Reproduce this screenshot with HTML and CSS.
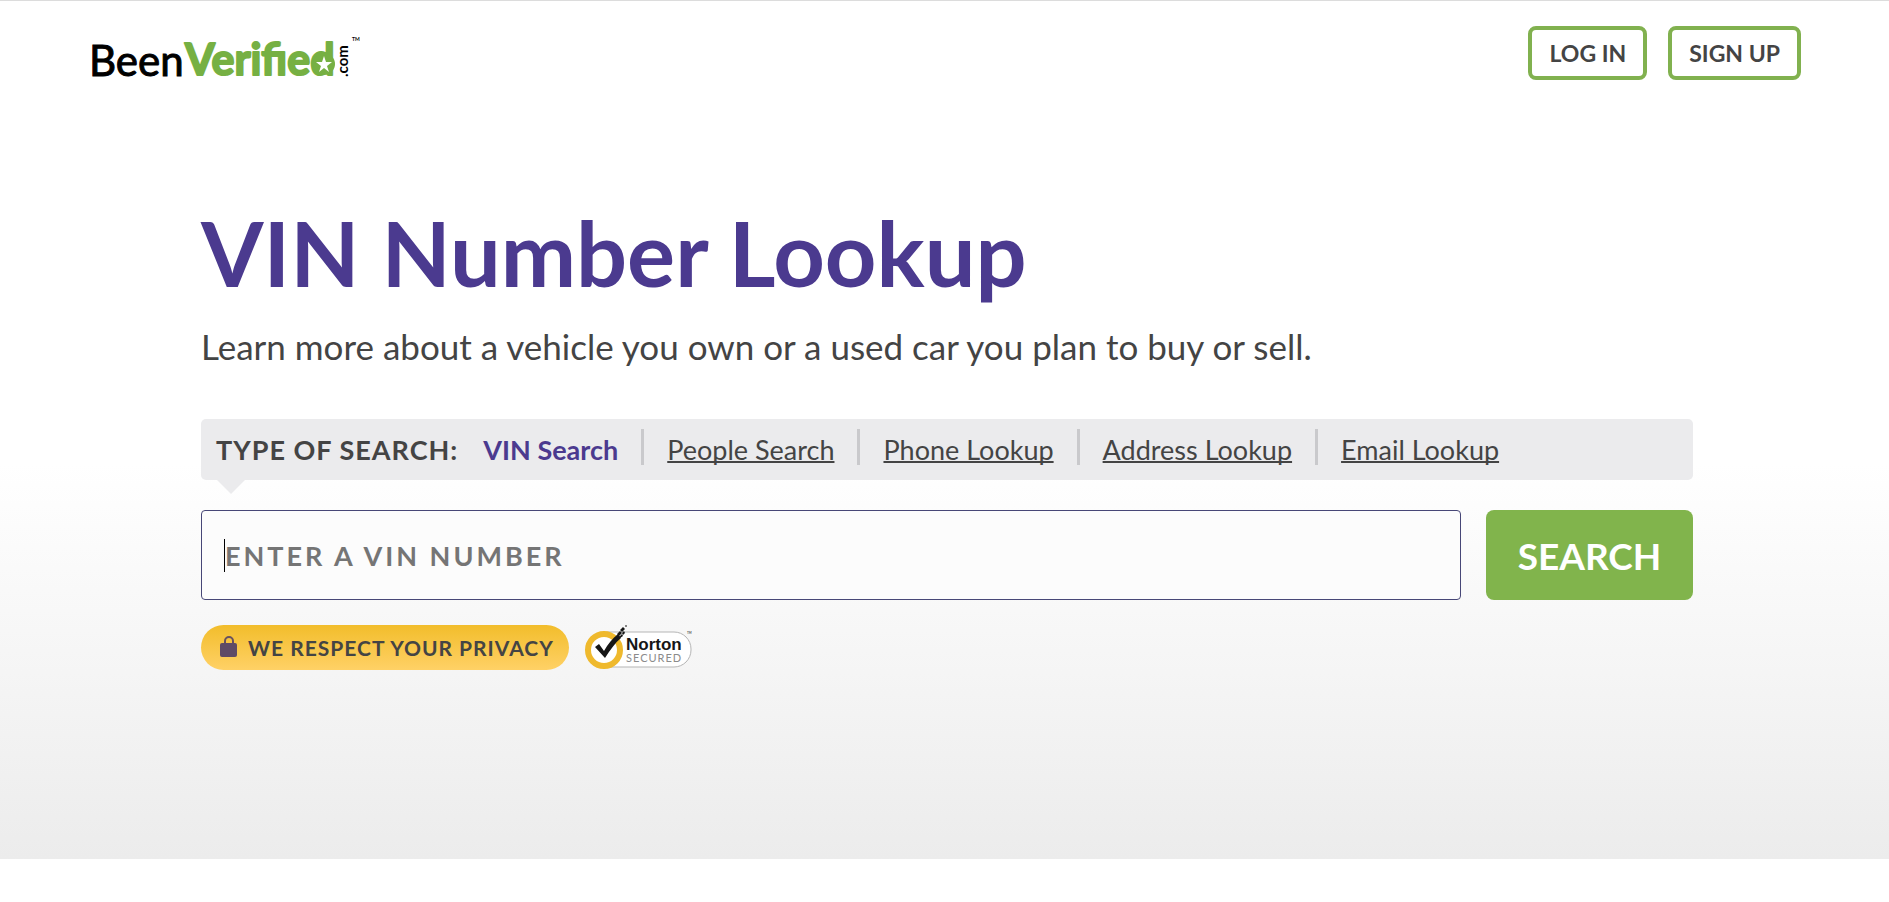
FILE: index.html
```
<!DOCTYPE html>
<html lang="en">
<head>
  <meta charset="UTF-8">
  <meta name="viewport" content="width=device-width, initial-scale=1.0">
  <title>VIN Number Lookup</title>
  <link rel="stylesheet" href="styles.css">
</head>
<body>
  <div class="hero">
    <header class="header">
      <a class="logo" href="#" aria-label="BeenVerified.com">
        <svg width="270" height="54" viewBox="0 0 270 54">
          <text class="logo-been" x="-3" y="50">Been</text>
          <text class="logo-verified" x="93" y="49">Verified</text>
          <circle cx="232" cy="38" r="11" fill="#76b043"/>
          <path d="M232 30l2 6h6l-5 4 2 6-5-4-5 4 2-6-5-4h6z" fill="#fff"/>
          <text class="logo-com" transform="translate(256 51) rotate(-90)">.com</text>
          <text class="logo-tm" x="260" y="15">TM</text>
        </svg>
      </a>
      <nav class="account">
        <a class="account-button" href="#">LOG IN</a>
        <a class="account-button" href="#">SIGN UP</a>
      </nav>
    </header>

    <main class="content">
      <h1>VIN Number Lookup</h1>
      <p class="subtitle">Learn more about a vehicle you own or a used car you plan to buy or sell.</p>

      <nav class="search-types">
        <span class="search-label">TYPE OF SEARCH:</span>
        <ul>
          <li class="active">VIN Search</li>
          <li><a href="#">People Search</a></li>
          <li><a href="#">Phone Lookup</a></li>
          <li><a href="#">Address Lookup</a></li>
          <li><a href="#">Email Lookup</a></li>
        </ul>
      </nav>

      <form class="search-form">
        <div class="vin-field">
          <input type="text" name="vin" aria-label="VIN number" placeholder="ENTER A VIN NUMBER">
        </div>
        <button type="submit">SEARCH</button>
      </form>

      <div class="badges">
        <div class="privacy">
          <svg width="18" height="22" viewBox="0 0 18 22">
            <path d="M5 8V5a4 4 0 0 1 8 0v3" fill="none" stroke="#67505f" stroke-width="2"/>
            <rect x="0" y="7" width="17" height="14" rx="2" fill="#5f4b66"/>
          </svg>
          <span>WE RESPECT YOUR PRIVACY</span>
        </div>
        <svg class="norton" width="110" height="46" viewBox="0 0 110 46">
          <rect x="8" y="8" width="99" height="35" rx="17" fill="#fff" stroke="#b5b5b5"/>
          <circle cx="20" cy="26" r="16" fill="#fff" stroke="#efb92d" stroke-width="6"/>
          <path d="M11 23l4-3 5 7c4-7 8-12 14-17l3 4c-6 5-11 12-16 20z" fill="#161616"/>
          <path d="M33 10l3-3 2 2-3 3zM36 6l3-3 2 2-3 3zM38 9l2-2 1 2-2 2zM35 13l3-3 1 2-3 2zM41 2l1-1 1 1-1 1z" fill="#161616"/>
          <text class="norton-name" x="42" y="26">Norton</text>
          <text class="norton-secured" x="42" y="38">SECURED</text>
          <text class="norton-tm" x="103" y="10">TM</text>
        </svg>
      </div>
    </main>
  </div>
</body>
</html>
```
FILE: styles.css
```
* {
  box-sizing: border-box;
}

body {
  margin: 0;
  font-family: Lato, "Liberation Sans", sans-serif;
  color: #444;
  background-color: #fff;
}

.hero {
  border-top: 1px solid #dcdcdc;
  padding-bottom: 189px;
  background: linear-gradient(#fff 54%, #ececec);
}

.header {
  display: flex;
  justify-content: space-between;
  align-items: center;
  padding: 25px 88px 0 92px;
}

.logo,
.logo svg {
  display: block;
}

.logo svg {
  overflow: visible;
}

.logo-been {
  font-size: 42px;
  fill: #000;
  stroke: #000;
  stroke-width: 1px;
}

.logo-verified {
  font-size: 43px;
  font-weight: bold;
  fill: #76b043;
  stroke: #76b043;
  stroke-width: 2px;
  stroke-linejoin: round;
}

.logo-com {
  font-size: 15px;
  font-weight: bold;
}

.logo-tm {
  font-size: 5px;
  font-weight: bold;
}

.account {
  display: flex;
  gap: 21px;
}

.account-button {
  padding: 0 17px;
  border: 4px solid #81b14f;
  border-radius: 8px;
  font-size: 23px;
  font-weight: bold;
  line-height: 46px;
  color: #444;
  text-decoration: none;
}

.content {
  padding: 116px 196px 0 201px;
}

h1 {
  margin: 0;
  font-size: 90px;
  line-height: 112px;
  color: #4b3a8f;
}

.subtitle {
  margin: 14px 0 0;
  font-size: 35px;
  line-height: 48px;
}

.search-types {
  position: relative;
  display: flex;
  align-items: center;
  height: 61px;
  margin-top: 49px;
  padding-left: 15px;
  border-radius: 5px;
  background-color: #ebebed;
  font-size: 27px;
  line-height: 36px;
}

/* little arrow under the bar */
.search-types::after {
  content: "";
  position: absolute;
  top: 100%;
  left: 16px;
  border: 14px solid transparent;
  border-top-color: #ebebed;
  border-bottom: 0;
}

.search-label {
  margin-right: 2px;
  font-weight: bold;
  letter-spacing: 1px;
}

.search-types ul {
  display: flex;
  margin: 0;
  padding: 0;
  list-style: none;
}

.search-types li {
  display: flex;
  padding: 0 23px;
}

.search-types li + li::before {
  content: "";
  width: 3px;
  height: 36px;
  margin: -3px 23px 0 0;
  background-color: #c9c9cc;
}

.search-types li + li {
  padding-left: 0;
}

.search-types a {
  color: #444;
  text-decoration-thickness: 2px;
  text-decoration-skip-ink: none;
}

.active {
  font-weight: bold;
  color: #4b3a8f;
}

.search-form {
  display: flex;
  gap: 25px;
  margin-top: 30px;
}

.vin-field {
  position: relative;
  flex: 1;
}

/* text cursor */
.vin-field::before {
  content: "";
  position: absolute;
  top: 29px;
  left: 23px;
  width: 1px;
  height: 33px;
  background-color: #000;
}

.vin-field input {
  display: block;
  width: 100%;
  height: 90px;
  padding: 0 23px;
  border: 1px solid #474777;
  border-radius: 4px;
  outline: none;
  background-color: #fcfcfc;
  font-family: inherit;
  font-size: 27px;
  font-weight: bold;
  letter-spacing: 3px;
}

.vin-field input::placeholder {
  color: #757575;
  opacity: 1;
}

.search-form button {
  width: 207px;
  height: 90px;
  border: 0;
  border-radius: 8px;
  background-color: #81b44c;
  color: #fff;
  font-family: inherit;
  font-size: 37px;
  font-weight: bold;
}

.badges {
  display: flex;
  align-items: center;
  gap: 15px;
  margin-top: 24px;
}

.privacy {
  display: flex;
  align-items: center;
  gap: 10px;
  height: 45px;
  padding: 0 15px 0 19px;
  border-radius: 23px;
  background: linear-gradient(#f2bd2b, #ffd166);
  font-size: 21px;
  font-weight: bold;
  letter-spacing: 1px;
}

.norton-name {
  font-family: "Liberation Sans", sans-serif;
  font-size: 17px;
  font-weight: bold;
  fill: #161616;
}

.norton-secured {
  font-size: 11px;
  letter-spacing: 1px;
  fill: #8b8b8b;
}

.norton-tm {
  font-size: 3px;
}
```
